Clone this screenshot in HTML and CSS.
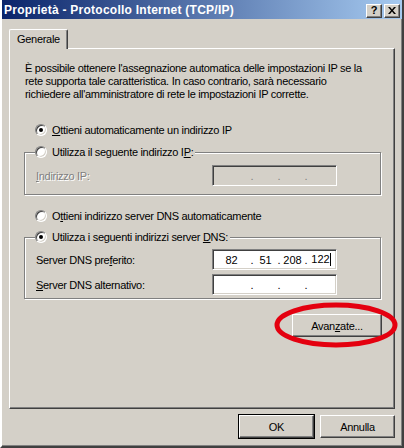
FILE: index.html
```html
<!DOCTYPE html>
<html lang="it">
<head>
  <meta charset="UTF-8">
  <title>Proprietà - Protocollo Internet (TCP/IP)</title>
  <link rel="stylesheet" href="styles.css">
</head>
<body>
  <div class="window">
    <div class="titlebar">
      <span class="title">Proprietà - Protocollo Internet (TCP/IP)</span>
      <div class="caption-btns">
        <span class="cbtn help">?</span>
        <span class="cbtn">
          <svg width="8" height="7" viewBox="0 0 8 7">
            <path d="M0 0h2l2 2.5 2-2.5h2l-3 3.5 3 3.5h-2l-2-2.5-2 2.5h-2l3-3.5z" fill="#000"/>
          </svg>
        </span>
      </div>
    </div>

    <div class="content">
      <div class="tabs">
        <div class="tab">Generale</div>
      </div>

      <div class="panel">
        <p class="desc">
          È possibile ottenere l'assegnazione automatica delle impostazioni IP se la<br>
          rete supporta tale caratteristica. In caso contrario, sarà necessario<br>
          richiedere all'amministratore di rete le impostazioni IP corrette.
        </p>

        <div class="option first">
          <span class="radio checked"></span>
          <span><u>O</u>ttieni automaticamente un indirizzo IP</span>
        </div>

        <fieldset class="group">
          <legend class="option">
            <span class="radio"></span>
            <span>Utilizza il seguente indirizzo I<u>P</u>:</span>
          </legend>
          <div class="field">
            <span class="label disabled"><u>I</u>ndirizzo IP:</span>
            <div class="ipbox off">
              <span></span><i>.</i><span></span><i>.</i><span></span><i>.</i><span></span>
            </div>
          </div>
        </fieldset>

        <div class="option second">
          <span class="radio"></span>
          <span>O<u>t</u>tieni indirizzo server DNS automaticamente</span>
        </div>

        <fieldset class="group dns">
          <legend class="option">
            <span class="radio checked"></span>
            <span>Utilizza i seguenti indirizzi server <u>D</u>NS:</span>
          </legend>
          <div class="field">
            <span class="label">Server DNS pre<u>f</u>erito:</span>
            <div class="ipbox">
              <span>82</span><i>.</i><span>51</span><i>.</i><span>208</span><i>.</i><span>122<b class="caret"></b></span>
            </div>
          </div>
          <div class="field">
            <span class="label"><u>S</u>erver DNS alternativo:</span>
            <div class="ipbox">
              <span></span><i>.</i><span></span><i>.</i><span></span><i>.</i><span></span>
            </div>
          </div>
        </fieldset>

        <div class="advanced">
          <button class="btn wide">Avan<u>z</u>ate...</button>
          <svg class="mark" width="130" height="50" viewBox="0 0 130 50">
            <ellipse cx="68" cy="23" rx="59" ry="20" fill="none" stroke="#e4000f" stroke-width="5"/>
          </svg>
        </div>
      </div>

      <div class="actions">
        <button class="btn default">OK</button>
        <button class="btn">Annulla</button>
      </div>
    </div>
  </div>
</body>
</html>
```

FILE: styles.css
```css
body {
  margin: 0;
  padding: 0;
  font-family: 'Liberation Sans', Arial, sans-serif;
  font-size: 11px;
  letter-spacing: -0.3px;
  color: #000;
  background: #d4d0c8;
}

.window {
  width: 404px;
  height: 448px;
  box-sizing: border-box;
  background: #d4d0c8;
  border-left: 2px solid #fff;
  border-right: 2px solid #404040;
  border-bottom: 2px solid #404040;
  box-shadow: inset -1px -1px #808080;
}

.titlebar {
  height: 19px;
  background: linear-gradient(to right, #0a246a, #a6caf0);
  display: flex;
  align-items: center;
  justify-content: space-between;
  padding: 0 2px 0 2px;
}

.title {
  color: #fff;
  font-weight: bold;
  font-size: 12px;
  letter-spacing: 0.25px;
}

.caption-btns {
  display: flex;
  gap: 2px;
  margin-top: 2px;
}

.cbtn {
  width: 16px;
  height: 14px;
  box-sizing: border-box;
  background: #d4d0c8;
  border: 1px solid;
  border-color: #fff #404040 #404040 #fff;
  box-shadow: inset -1px -1px #808080;
  display: flex;
  align-items: center;
  justify-content: center;
  font-weight: bold;
  font-size: 11px;
  letter-spacing: 0;
  line-height: 1;
}

.content {
  padding: 10px 7px 0 7px;
}

.tabs {
  display: flex;
  height: 19px;
}

.tab {
  position: relative;
  z-index: 1;
  height: 20px;
  box-sizing: border-box;
  padding: 3px 7px 0 7px;
  background: #d4d0c8;
  border: 1px solid;
  border-color: #fff #404040 transparent #fff;
  border-bottom: none;
  box-shadow: inset -1px 0 #808080;
  border-radius: 2px 2px 0 0;
}

.panel {
  height: 361px;
  box-sizing: border-box;
  padding: 13px 13px 0 15px;
  border: 1px solid;
  border-color: #fff #404040 #404040 #fff;
  box-shadow: inset -1px -1px #808080;
}

.desc {
  margin: 0;
  line-height: 13px;
  white-space: nowrap;
}

.option {
  display: flex;
  align-items: center;
  gap: 5px;
  height: 16px;
}

.option.first {
  margin: 21px 0 6px 10px;
}

.option.second {
  margin: 13px 0 5px 10px;
}

.radio {
  width: 12px;
  height: 12px;
  box-sizing: border-box;
  border-radius: 50%;
  background: #fff;
  border: 1px solid;
  border-color: #808080 #fff #fff #808080;
  box-shadow: inset 1px 1px #404040, inset -1px -1px #d4d0c8;
  display: flex;
  align-items: center;
  justify-content: center;
}

.radio.checked::after {
  content: "";
  width: 4px;
  height: 4px;
  border-radius: 50%;
  background: #000;
}

.group {
  margin: 0 0 0 -1px;
  padding: 5px 43px 8px 10px;
  border: 1px solid #808080;
  box-shadow: inset 1px 1px #fff, 1px 1px #fff;
}

.group legend {
  padding: 0 2px 0 0;
  background: #d4d0c8;
}

.group.dns {
  padding-top: 4px;
  padding-bottom: 3px;
}

.field {
  display: flex;
  justify-content: space-between;
  align-items: center;
  padding-left: 1px;
}

.field + .field {
  margin-top: 4px;
}

.label.disabled {
  color: #808080;
  text-shadow: 1px 1px #fff;
}

.ipbox {
  width: 125px;
  height: 21px;
  box-sizing: border-box;
  background: #fff;
  border: 1px solid;
  border-color: #808080 #fff #fff #808080;
  box-shadow: inset 1px 1px #404040, inset -1px -1px #d4d0c8;
  display: grid;
  grid-template-columns: 35px 6px 21px 6px 21px 6px 24px;
  align-items: center;
  padding-left: 1px;
  letter-spacing: 0;
}

.ipbox.off {
  background: #d4d0c8;
  color: #808080;
}

.ipbox span {
  text-align: center;
}

.ipbox i {
  font-style: normal;
  text-align: center;
}

.caret {
  display: inline-block;
  width: 1px;
  height: 13px;
  background: #000;
  vertical-align: middle;
}

.advanced {
  position: relative;
  display: flex;
  justify-content: flex-end;
  margin-top: 15px;
  margin-right: -1px;
}

.mark {
  position: absolute;
  right: -16px;
  top: -12px;
  overflow: visible;
}

.btn {
  font-family: inherit;
  font-size: 11px;
  letter-spacing: inherit;
  color: #000;
  width: 75px;
  height: 23px;
  padding: 0;
  background: #d4d0c8;
  border: 1px solid;
  border-color: #fff #404040 #404040 #fff;
  box-shadow: inset -1px -1px #808080;
  border-radius: 0;
}

.btn.wide {
  width: 90px;
}

.btn.default {
  outline: 1px solid #000;
  outline-offset: 0;
}

.actions {
  display: flex;
  justify-content: flex-end;
  gap: 6px;
  margin-top: 6px;
}
```
